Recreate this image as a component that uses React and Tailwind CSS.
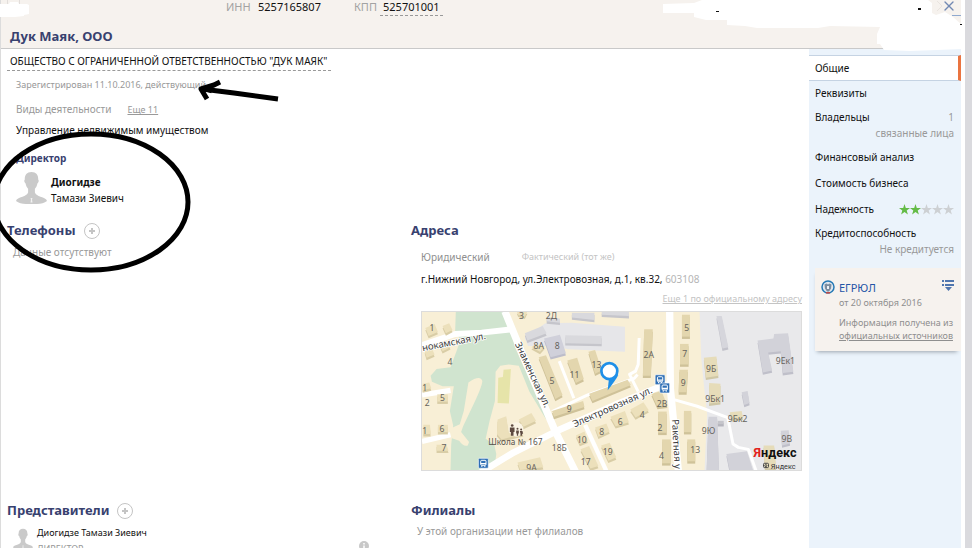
import React from 'react';
import { X } from 'lucide-react';

const menuItems = [
  { title: 'Реквизиты', height: 'h-6' },
  { title: 'Владельцы', value: '1', note: 'связанные лица', height: 'h-10' },
  { title: 'Финансовый анализ', height: 'h-[26px]' },
  { title: 'Стоимость бизнеса', height: 'h-[26px]' },
  { title: 'Надежность', stars: 2, height: 'h-6' },
  { title: 'Кредитоспособность', note: 'Не кредитуется', height: 'h-9' }
];

// fill, side fill, outline
const buildings = [
  ['#ece0bb', '#d9cda6', '10,50 38,38 48,62 20,74'],
  ['#ece0bb', '#d9cda6', '62,44 82,36 92,56 72,66'],
  ['#ece0bb', '#d9cda6', '54,102 78,92 86,108 62,120'],
  ['#ece0bb', '#d9cda6', '8,120 30,112 38,130 14,140'],
  ['#ece0bb', '#d9cda6', '2,218 22,214 28,232 2,238'],
  ['#ece0bb', '#d9cda6', '46,250 78,250 78,272 46,272'],
  ['#ece0bb', '#d9cda6', '4,342 24,342 26,370 4,370'],
  ['#ece0bb', '#d9cda6', '48,342 78,342 78,364 48,364'],
  ['#ece0bb', '#d9cda6', '44,402 74,402 80,420 44,420'],
  ['#ece0bb', '#d9cda6', '286,0 318,0 310,16 290,10'],
  ['#d9d9dd', '#c5c5cb', '310,66 364,44 376,66 318,88'],
  ['#d0d0da', '#bdbdca', '368,82 416,70 434,126 388,138'],
  ['#d9d9dd', '#c5c5cb', '432,72 542,74 542,98 432,96'],
  ['#d9d9dd', '#c5c5cb', '376,16 416,22 416,34 376,30'],
  ['#d9d9dd', '#c5c5cb', '452,4 520,4 520,26 452,18'],
  ['#d9d9dd', '#c5c5cb', '542,0 624,0 624,14 542,10'],
  ['#ece0bb', '#d9cda6', '330,108 342,98 370,106 356,122'],
  ['#e3d6ae', '#cfc299', '352,138 374,132 424,252 402,264'],
  ['#e3d6ae', '#cfc299', '438,148 468,140 488,204 464,216'],
  ['#e3d6ae', '#cfc299', '502,122 522,116 542,178 522,188'],
  ['#e3d6ae', '#cfc299', '392,300 486,270 490,288 398,318'],
  ['#e3d6ae', '#cfc299', '504,248 620,206 630,222 514,270'],
  ['#ece0bb', '#d9cda6', '228,326 254,316 262,368 292,350 306,370 240,386 226,370'],
  ['#ece0bb', '#d9cda6', '292,326 330,306 344,330 306,348'],
  ['#ece0bb', '#d9cda6', '464,374 490,362 500,390 476,400'],
  ['#ece0bb', '#d9cda6', '522,350 556,338 566,362 532,378'],
  ['#ece0bb', '#d9cda6', '478,416 504,406 532,466 508,474'],
  ['#ece0bb', '#d9cda6', '540,404 566,396 586,440 562,450'],
  ['#ece0bb', '#d9cda6', '288,456 356,440 366,470 296,478'],
  ['#ece0bb', '#d9cda6', '568,318 612,300 624,334 584,346'],
  ['#ece0bb', '#d9cda6', '628,296 668,274 684,298 644,320'],
  ['#e3d6ae', '#cfc299', '670,54 696,54 690,194 666,194'],
  ['#e3d6ae', '#cfc299', '784,10 808,10 808,76 784,76'],
  ['#e3d6ae', '#cfc299', '778,98 804,98 804,160 778,160'],
  ['#e3d6ae', '#cfc299', '776,176 802,176 798,244 774,244'],
  ['#e3d6ae', '#cfc299', '692,248 722,240 740,284 710,288'],
  ['#e3d6ae', '#cfc299', '712,302 738,302 738,366 712,366'],
  ['#e3d6ae', '#cfc299', '724,386 750,386 750,458 724,458'],
  ['#e3d6ae', '#cfc299', '790,300 812,300 812,364 790,364'],
  ['#e3d6ae', '#cfc299', '800,386 824,386 824,452 800,452'],
  ['#e6dcb9', '#cfc7a6', '850,140 888,136 894,194 856,200'],
  ['#e6dcb9', '#cfc7a6', '866,216 900,218 900,274 866,278'],
  ['#e6dcb9', '#cfc7a6', '928,304 964,300 968,320 934,326'],
  ['#d6d6dc', '#c3c3cb', '888,14 904,14 924,108 906,112'],
  ['#d2d2d9', '#bfbfc9', '1012,88 1060,82 1062,68 1104,66 1120,182 1088,186 1082,120 1044,124 1056,178 1028,184'],
  ['#d2d2d9', '#bfbfc9', '964,244 982,240 988,276 972,282'],
  ['#d2d2d9', '#bfbfc9', '1082,360 1106,358 1110,398 1086,404'],
  ['#d2d2d9', '#bfbfc9', '918,430 980,422 1002,490 930,490'],
  ['#d2d2d9', '#bfbfc9', '864,318 890,318 896,490 858,490'],
  ['#c5c5cb', '#b5b5bd', '892,330 910,330 910,340 892,340'],
  ['#e6dcb9', '#cfc7a6', '1030,404 1062,404 1068,474 1034,474']
];

const houses = [
  ['1', 30, 58], ['4', 84, 162], ['1', 8, 240], ['5', 62, 270], ['2', 16, 286], ['1', 8, 370],
  ['6', 60, 364], ['7', 66, 420], ['3', 300, 22], ['2Д', 390, 24], ['8А', 352, 114], ['8', 408, 112],
  ['5', 392, 220], ['11', 460, 200], ['13', 526, 170], ['9', 444, 302], ['18Б', 414, 420],
  ['10', 482, 398], ['8', 542, 374], ['19', 560, 432], ['17', 494, 464], ['9А', 330, 480],
  ['2А', 684, 140], ['5', 798, 60], ['7', 792, 138], ['9', 788, 226], ['9Б', 872, 184],
  ['9Ек1', 1096, 158], ['9Бк1', 884, 274], ['2В', 724, 288], ['4', 664, 320], ['6', 598, 342],
  ['2', 718, 362], ['9Бк2', 952, 334], ['9Ю', 864, 370], ['9В', 1100, 394], ['4', 722, 444],
  ['13', 824, 428]
];

function Avatar({ className }) {
  return (
    <svg viewBox="0 0 31 32" className={className} fill="#cacaca">
      <path d="M15.500 0c4.600 0 7 3 6.700 7.600 1 .6.500 3.400-.8 3.800-.5 2.600-1.400 4.100-2.500 5.300v3.800c.8 2 3 3.500 5.600 4.300 3.400 1 6 2 6.500 4.200-2.500 2-6 3-10 3H10c-4 0-7.500-1-10-3 .5-2.200 3.100-3.200 6.500-4.200 2.600-.8 4.800-2.300 5.600-4.300v-3.800c-1.100-1.200-2-2.700-2.500-5.300-1.300-.4-1.800-3.200-.8-3.800C8.500 3 10.900 0 15.500 0z" />
      <path d="M14.500 26h2l-.5 1.500.5 3h-2l.5-3z" fill="#f2f2f2" />
    </svg>
  );
}

function AddButton({ label }) {
  return (
    <button type="button" aria-label={label} className="h-4 w-4 shrink-0">
      <svg viewBox="0 0 16 16" className="h-4 w-4" fill="none" stroke="#c4c4c4">
        <circle cx="8" cy="8" r="7.500" />
        <path d="M8 5v6M5 8h6" strokeWidth="2" />
      </svg>
    </button>
  );
}

function SectionTitle({ children, add }) {
  return (
    <div className="flex h-6 items-center gap-2">
      <h2 className="text-[13px] font-bold text-[#38416f]">{children}</h2>
      {add && <AddButton label={add} />}
    </div>
  );
}

function Stars({ count }) {
  return (
    <span className="flex">
      {[0, 1, 2, 3, 4].map(i => (
        <svg key={i} viewBox="0 0 11 11" className="h-[11px] w-[11px]" fill={i < count ? '#64bb46' : '#cdd0d3'}>
          <path d="M5.500 0l1.300 3.900H11L7.700 6.400 8.900 10.500 5.500 8 2.100 10.500 3.300 6.400 0 3.900h4.200z" />
        </svg>
      ))}
    </span>
  );
}

function BusStop({ x, y }) {
  return (
    <g transform={`translate(${x} ${y})`}>
      <rect width="30" height="30" rx="3" fill="#2f6fb5" stroke="#fff" strokeWidth="2" />
      <rect x="7" y="6" width="16" height="15" rx="3" fill="none" stroke="#fff" strokeWidth="3" />
      <path d="M7 16h16M9 24h3M18 24h3" stroke="#fff" strokeWidth="4" />
    </g>
  );
}

function CityMap() {
  return (
    <svg
      viewBox="0 0 1143 480"
      preserveAspectRatio="xMidYMid slice"
      className="block h-40 w-full border border-[#dcdcdc]"
    >
      <rect width="1143" height="480" fill="#f8efd6" />
      <path d="M837 0L842 140 852 240 860 310 852 480H1143V0z" fill="#e9e9eb" />
      <path d="M310 80L372 36 452 34 612 46 612 122 440 114 400 104 320 104z" fill="#e6e6e9" />
      <path
        d="M102 0H248L268 60 282 112 306 166 330 200 362 262 388 320 396 350 372 322 324 242 292 164 262 160 236 164 222 182 220 270 204 330 192 384 218 402 224 430 220 462 196 480H86L88 402 94 344 84 300 96 226 62 226 30 212 26 194 44 174 86 168 104 120 116 86 100 58z"
        fill="#d0e4cf"
      />
      <path
        d="M140 214Q176 190 182 210 182 226 148 296L124 346 118 364 142 394 138 404Q126 410 112 390L88 382V352L114 340 126 300z"
        fill="#f8efd6"
      />
      <path d="M230 200L244 198 246 176 268 174 262 278 228 276z" fill="#e6e4a9" />

      <g fill="none" stroke="#fff" strokeLinejoin="round">
        <path d="M0 102L100 68 180 64 270 54" strokeWidth="18" />
        <path d="M0 252L86 238M0 392L86 372" strokeWidth="16" />
        <path d="M414 150L458 262" strokeWidth="9" />
        <path d="M392 302L500 252 640 202 650 190" strokeWidth="9" />
        <path d="M655 80L652 160 644 180 626 190 652 242" strokeWidth="9" />
        <path d="M492 342L560 490" strokeWidth="13" />
        <path d="M250 0L300 122 402 362 466 490" strokeWidth="22" />
        <path d="M170 490L272 428 412 358 582 282 740 218" strokeWidth="20" />
        <path d="M747 0L749 232 774 490" strokeWidth="22" />
        <path d="M760 266L830 286 922 320 938 400 954 410 984 416 1008 482" strokeWidth="9" />
      </g>

      {buildings.map(([fill, side, points]) => (
        <g key={points}>
          <polygon points={points} fill={side} transform="translate(0 7)" />
          <polygon points={points} fill={fill} />
        </g>
      ))}

      <g fontSize="26" fill="#66635c" textAnchor="middle">
        {houses.map(([name, x, y]) => (
          <text key={`${name}-${x}-${y}`} x={x} y={y}>{name}</text>
        ))}
      </g>
      <g fontSize="29" fill="#3d3d40" stroke="#fff" strokeWidth="5" strokeLinejoin="round" paintOrder="stroke">
        <text transform="translate(2 120) rotate(-11)">нокамская ул.</text>
        <text transform="translate(280 98) rotate(65)">Знаменская ул.</text>
        <text transform="translate(460 350) rotate(-24)">Электровозная ул.</text>
        <text transform="translate(754 326) rotate(87)">Ракетная у</text>
      </g>
      <text x="200" y="404" fontSize="25" fill="#58534e">Школа № 167</text>

      <circle cx="284" cy="356" r="22" fill="#fbf5e5" />
      <g fill="#5d4a40">
        <circle cx="272" cy="344" r="4" />
        <path d="M265 350h14v14h-3v11h-8v-11h-3z" />
        <circle cx="288" cy="354" r="3" />
        <path d="M284 359h8v9h-2v7h-4v-7h-2z" />
        <circle cx="299" cy="356" r="3" />
        <path d="M295 361h8l2 8h-3v6h-5v-6z" />
      </g>

      <BusStop x={170} y={443} />
      <BusStop x={703} y={191} />
      <BusStop x={717} y={216} />

      <path d="M560 238L564 200 592 192Q584 208 560 238z" fill="#1e8fe8" />
      <circle cx="565" cy="180" r="24" fill="#fff" stroke="#1e8fe8" strokeWidth="8" />

      <text x="1000" y="440" fontSize="38" className="font-['Roboto',sans-serif] font-bold" fill="#111">
        <tspan fill="#e3211c">Я</tspan>ндекс
      </text>
      <g fill="none" stroke="#444" strokeWidth="3">
        <rect x="1030" y="458" width="15" height="13" rx="3" />
        <circle cx="1037" cy="465" r="3" />
      </g>
      <text x="1052" y="474" fontSize="22" className="font-['Roboto',sans-serif]" fill="#333">Яндекс</text>
    </svg>
  );
}

function Header() {
  return (
    <header className="relative flex h-[49px] flex-col justify-between border-b border-[#c9c9c9] bg-[#f6f2ee]">
      <dl className="flex pl-[225px] text-[11px] leading-[14px]">
        <dt className="w-8 text-[#a3a3a3]">ИНН</dt>
        <dd className="w-24">5257165807</dd>
        <dt className="w-[26px] text-[#a3a3a3]">КПП</dt>
        <dd className="border-b border-dashed border-[#999] px-[3px] pb-px">525701001</dd>
      </dl>
      <h1 className="h-6 pl-[9px] text-[13px] leading-6 font-bold text-[#38416f]">Дук Маяк, ООО</h1>
      <svg className="pointer-events-none absolute top-0 -left-px h-5 w-8" viewBox="0 0 32 20">
        <path d="M7.500 0V4M19.500 0V4" stroke="#e2dedb" fill="none" />
        <path d="M0 4H9L10 2H18L19 4H27L29 5V14L24 15V16L15 17H0z" fill="#fff" />
      </svg>
      <svg className="pointer-events-none absolute top-0 -right-1 h-[52px] w-[312px]" viewBox="653 0 312 52">
        <path
          d="M663 4L694 3 702 0H928L932 3V13L936 15 945 12 953 17 962 25V31L966 32V46L962 49 937 50 910 51 884 50 880 44H877V34L880 27 830 26 818 28H757L745 26 727 25V20H706L694 17V13H663z"
          fill="#fff"
        />
        <path d="M716 11h3v1h-3zM918 8h3v2h-3zM960 24h2v1h-2z" fill="#111" />
        <path d="M937 1l5 5-5 5" stroke="#e9e4df" fill="none" />
        <path d="M952 15.500h9" stroke="#8fa9cf" />
      </svg>
      <button type="button" aria-label="Закрыть" className="absolute -top-0.5 right-1 text-[#7289b3]">
        <X className="h-4 w-4" strokeWidth={2} />
      </button>
    </header>
  );
}

function Sidebar() {
  return (
    <aside className="w-[152px] shrink-0 bg-[#ebf3fb] pt-1.5">
      <nav>
        <a href="#general" className="mb-px flex h-[26px] items-center border-y border-r-3 border-y-[#c5d3e3] border-r-[#ea7440] bg-white pl-1.5">
          Общие
        </a>
        {menuItems.map(item => (
          <a key={item.title} href="#section" className={`${item.height} block pt-[3px] pr-[7px] pl-1.5 leading-4`}>
            <span className="flex items-center justify-between">
              {item.title}
              {item.value && <span className="text-[#999]">{item.value}</span>}
              {item.stars && <Stars count={item.stars} />}
            </span>
            {item.note && <span className="block text-right text-[#999]">{item.note}</span>}
          </a>
        ))}
      </nav>
      <section className="relative mt-2.5 ml-1.5 flex h-[83px] bg-[#f6f2ee] pt-3 pr-[7px] pl-1.5 text-[#8f8f8f] shadow-[-1px_4px_4px_-3px_#9aa3ad]">
        <svg viewBox="0 0 14 14" className="h-3.5 w-3.5 shrink-0">
          <circle cx="7" cy="7" r="6" fill="#dfe7ef" stroke="#2579b5" strokeWidth="1.500" />
          <path d="M3.500 4.500l2-1 1.500 1 1.500-1 2 1-.5 4-2 3H6l-2-3z" fill="#7b8da0" />
          <path d="M6 6h2v3H6z" fill="#eef2f6" />
          <path d="M5 12.800h4" stroke="#c54a45" strokeWidth="1.500" />
        </svg>
        <div className="ml-1 flex-1">
          <a href="#egrul" className="block text-[11px] leading-4 text-[#2454a6]">ЕГРЮЛ</a>
          <p className="text-[9px] leading-[14px]">от 20 октября 2016</p>
          <p className="mt-1.5 text-[9px] leading-[13px] whitespace-nowrap">
            Информация получена из<br />
            <a href="#sources" className="underline">официальных источников</a>
          </p>
        </div>
        <button type="button" aria-label="Меню" className="absolute top-3 right-[7px]">
          <svg viewBox="0 0 12 11" className="h-[11px] w-3" fill="#5076ae">
            <path d="M0 0h2v2H0zM3 0h9v2H3zM0 4h2v2H0zM3 4h9v2H3zM3 7h7L6.500 11z" />
          </svg>
        </button>
      </section>
    </aside>
  );
}

export default function App() {
  return (
    <div className="relative flex h-screen overflow-hidden bg-white font-['Noto_Sans',sans-serif] text-[10px] text-[#111]">
      <div className="flex min-w-0 flex-1 flex-col border-l border-[#dcdcdc]">
        <Header />
        <div className="flex min-h-0 flex-1">
          <main className="min-w-0 flex-1 pt-1">
            <div className="h-[166px] pl-1.5">
              <p className="inline-block border-b border-dashed border-[#999] pr-1 pb-px pl-[3px] text-[10px] leading-4">
                ОБЩЕСТВО С ОГРАНИЧЕННОЙ ОТВЕТСТВЕННОСТЬЮ "ДУК МАЯК"
              </p>
              <div className="pl-[9px]">
                <p className="mt-1.5 text-[9px] leading-4 text-[#999]">Зарегистрирован 11.10.2016, действующий</p>
                <p className="mt-2 leading-4 text-[#999]">
                  Виды деятельности
                  <a href="#activities" className="ml-4 text-[9px] underline">Еще 11</a>
                </p>
                <p className="mt-1 leading-4">Управление недвижимым имуществом</p>
                <h2 className="mt-3 leading-4 font-bold text-[#38416f]">Директор</h2>
                <div className="mt-1.5 flex gap-1">
                  <Avatar className="h-8 w-[31px]" />
                  <p className="pt-0.5 leading-4"><b>Диогидзе</b><br />Тамази Зиевич</p>
                </div>
              </div>
            </div>

            <div className="grid grid-cols-2">
              <section className="h-[280px] pl-1.5">
                <SectionTitle add="Добавить телефон">Телефоны</SectionTitle>
                <p className="pt-px pl-1.5 leading-4 text-[#999]">Данные отсутствуют</p>
              </section>
              <section className="h-[280px] pr-[7px] pl-1.5">
                <SectionTitle>Адреса</SectionTitle>
                <div className="pt-1.5 pl-2.5">
                  <div className="flex items-center gap-8 leading-4">
                    <button type="button" className="text-[#8f8f8f]">Юридический</button>
                    <button type="button" className="text-[9px] text-[#c4c4c4]">Фактический (тот же)</button>
                  </div>
                  <p className="mt-1.5 leading-4 whitespace-nowrap">
                    г.Нижний Новгород, ул.Электровозная, д.1, кв.32, <span className="text-[#b5b5b5]">603108</span>
                  </p>
                  <p className="mt-1 text-right text-[9px] leading-4 text-[#c4c4c4]">
                    <a href="#addresses" className="underline">Еще 1 по официальному адресу</a>
                  </p>
                  <div className="mt-1"><CityMap /></div>
                </div>
              </section>
              <section className="pl-1.5">
                <SectionTitle add="Добавить представителя">Представители</SectionTitle>
                <div className="flex gap-1 pt-1 pl-1.5">
                  <Avatar className="h-6 w-5" />
                  <div className="flex-1">
                    <p className="text-[9px] leading-3">Диогидзе Тамази Зиевич</p>
                    <p className="mt-1 text-[9px] leading-3 text-[#999]">ДИРЕКТОР</p>
                  </div>
                  <svg viewBox="0 0 10 10" className="mt-3.5 mr-9 h-2.5 w-2.5">
                    <circle cx="5" cy="5" r="5" fill="#c8c8c8" />
                    <path d="M5 2v1.500M5 4.500v3.500" stroke="#fff" strokeWidth="1.500" />
                  </svg>
                </div>
              </section>
              <section className="pl-1.5">
                <SectionTitle>Филиалы</SectionTitle>
                <p className="pl-1.5 leading-4 text-[#999]">У этой организации нет филиалов</p>
              </section>
            </div>
          </main>
          <Sidebar />
        </div>
      </div>
      <div className="ml-1 w-[7px] shrink-0 bg-[#dadade]" />

      <svg
        className="pointer-events-none absolute top-0 left-0 h-[280px] w-[300px]"
        viewBox="0 0 300 280"
        fill="none"
        stroke="#000"
        strokeWidth="5"
        strokeLinejoin="round"
      >
        <ellipse cx="91" cy="202" rx="97" ry="68" />
        <path d="M278 99L234 93 202 89" />
        <path d="M220 82L214 85 201 89 207 99M203 88L212 91" />
      </svg>
    </div>
  );
}
